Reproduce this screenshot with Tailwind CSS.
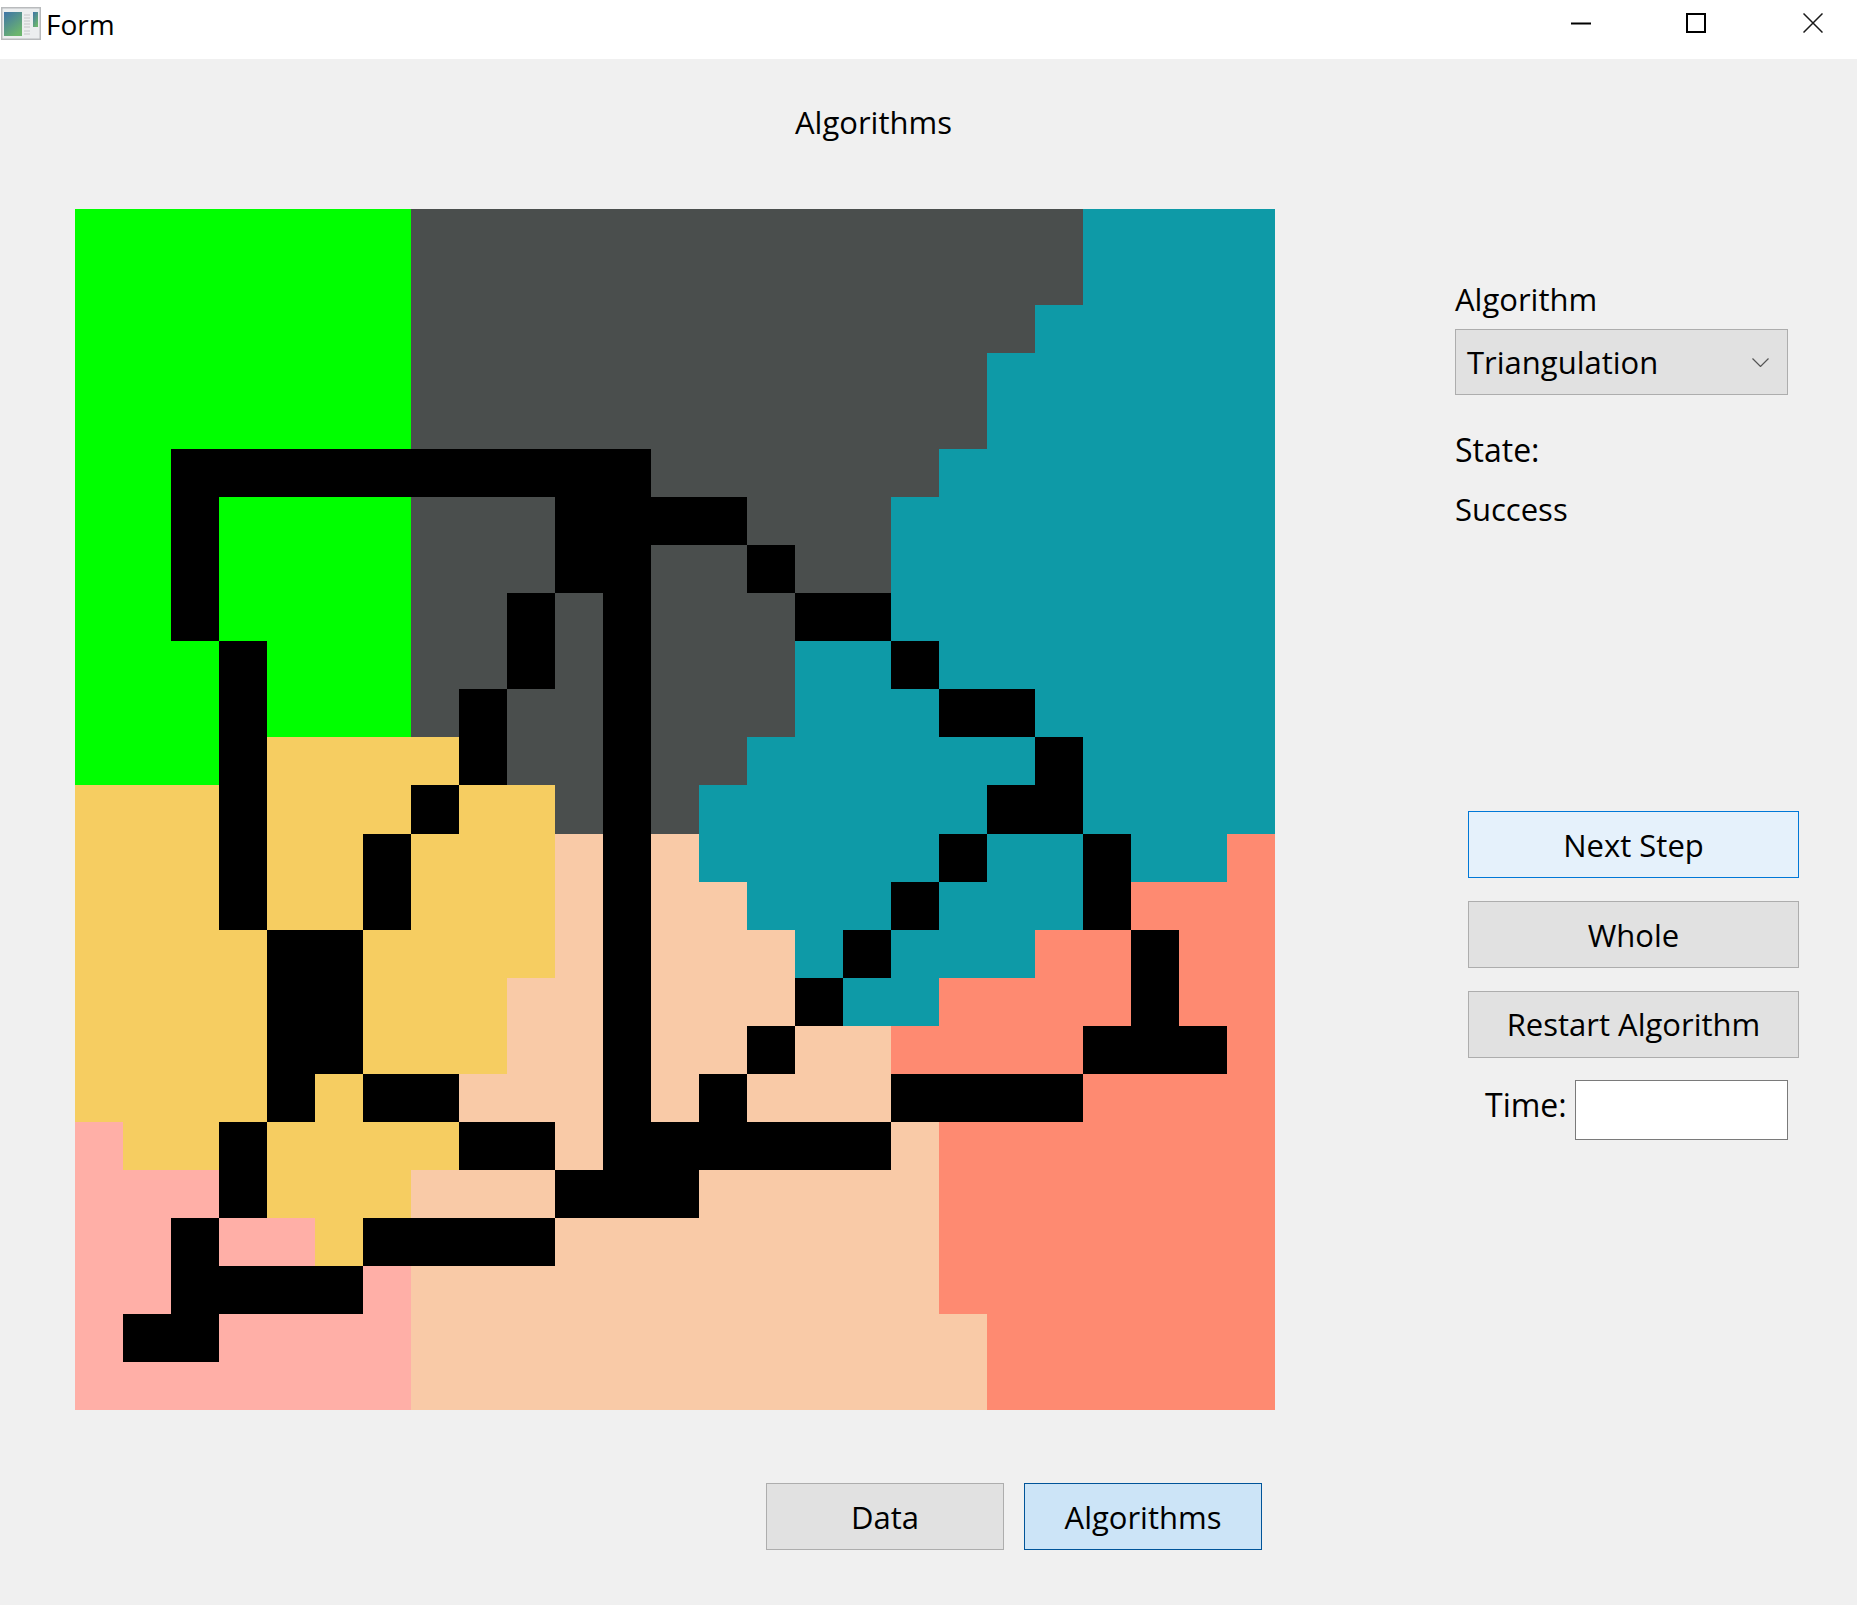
<!DOCTYPE html>
<html lang="en">
<head>
    <meta charset="UTF-8">
    <title>Form</title>
    <script src="https://cdn.jsdelivr.net/npm/@tailwindcss/browser@4"></script>
</head>
<body class="h-[1605px] w-[1857px] flex flex-col overflow-hidden bg-[#f0f0f0] text-black font-['Open_Sans',sans-serif] text-[31px] leading-none">
    <!-- Title bar -->
    <header class="h-[59px] bg-white flex items-center shrink-0 relative">
        <svg class="ml-[1px] mb-[12px] w-[40px] h-[34px]" viewBox="0 0 40 34">
            <defs>
                <linearGradient id="pane" x1="0" y1="0" x2="0.6" y2="1">
                    <stop offset="0" stop-color="#3f74a8"/>
                    <stop offset="1" stop-color="#6cb56e"/>
                </linearGradient>
            </defs>
            <rect x="0" y="0" width="40" height="33" fill="#b9bbbd"/>
            <rect x="1.5" y="1.5" width="37" height="30" fill="#eceeef"/>
            <rect x="3" y="5" width="18" height="24" fill="url(#pane)"/>
            <rect x="32" y="5" width="5" height="15" fill="url(#pane)"/>
            <path d="M23 8h6M23 11h6M23 14h6M23 17h6M23 20h6M23 24h6M23 27h6" stroke="#c4c6c8" stroke-width="1"/>
        </svg>
        <span class="ml-[5px] mb-[12px] text-[28px]">Form</span>
        <svg class="ml-auto w-[20px] h-[20px] mb-[13px]" viewBox="0 0 20 20"><path d="M0 10.5h20" stroke="#000" stroke-width="2"/></svg>
        <svg class="ml-[95px] w-[20px] h-[20px] mb-[13px]" viewBox="0 0 20 20"><rect x="1" y="1" width="18" height="18" fill="none" stroke="#000" stroke-width="2"/></svg>
        <svg class="ml-[97px] mr-[34px] w-[20px] h-[20px] mb-[13px]" viewBox="0 0 20 20"><path d="M0.5 0.5l19 19M19.5 0.5l-19 19" stroke="#1a1a1a" stroke-width="1.5"/></svg>
    </header>

    <main class="flex-1 flex">
        <!-- Left: heading, region grid, tab buttons -->
        <section class="w-[1455px] shrink-0 flex flex-col">
            <div class="h-[150px] pl-[795px] pt-[48px]">Algorithms</div>
            <div id="grid" class="ml-[75px] w-[1200px] h-[1201px] grid grid-cols-[repeat(25,48px)] grid-rows-[repeat(25,1fr)]"></div>
            <div class="mt-[73px] ml-[766px] flex gap-[20px]">
                <button class="w-[238px] h-[67px] pt-[2px] bg-[#e1e1e1] border border-[#adadad]">Data</button>
                <button class="w-[238px] h-[67px] pt-[2px] bg-[#cce4f7] border border-[#005499]">Algorithms</button>
            </div>
        </section>

        <!-- Right: controls -->
        <aside class="flex-1 flex flex-col">
            <label class="mt-[214px] h-[56px] pb-[4px] flex items-center">Algorithm</label>
            <div class="w-[333px] h-[66px] bg-[#e1e1e1] border border-[#adadad] flex items-center pl-[11px] pr-[18px] justify-between">
                <span>Triangulation</span>
                <svg class="w-[17px] h-[9px]" viewBox="0 0 17 9"><path d="M0.5 0.5l8 8 8-8" fill="none" stroke="#555" stroke-width="1.2"/></svg>
            </div>
            <div class="mt-[39px] text-[32px]">State:</div>
            <div class="mt-[28px]">Success</div>
            <div class="mt-[286px] ml-[13px] flex flex-col gap-[23px] w-[331px]">
                <button class="h-[67px] pt-[2px] bg-[#e5f1fb] border border-[#0078d7]">Next Step</button>
                <button class="h-[67px] pt-[2px] bg-[#e1e1e1] border border-[#adadad]">Whole</button>
                <button class="h-[67px] bg-[#e1e1e1] border border-[#adadad]">Restart Algorithm</button>
            </div>
            <div class="mt-[22px] ml-[30px] flex items-center">
                <span class="w-[90px] pb-[10px] text-[32px]">Time:</span>
                <input type="text" class="w-[213px] h-[60px] bg-white border border-[#7a7a7a]">
            </div>
        </aside>
    </main>

    <script>
        // G green, D dark, T teal, Y yellow, P peach, R pink, O salmon, K wall
        const colors = {
            G: 'bg-[#00ff00]',
            D: 'bg-[#4a4e4d]',
            T: 'bg-[#0e9aa7]',
            Y: 'bg-[#f6cd61]',
            P: 'bg-[#f9caa7]',
            R: 'bg-[#ffafa7]',
            O: 'bg-[#fe8a71]',
            K: 'bg-black'
        };
        const rows = [
            'GGGGGGGDDDDDDDDDDDDDDTTTT',
            'GGGGGGGDDDDDDDDDDDDDDTTTT',
            'GGGGGGGDDDDDDDDDDDDDTTTTT',
            'GGGGGGGDDDDDDDDDDDDTTTTTT',
            'GGGGGGGDDDDDDDDDDDDTTTTTT',
            'GGKKKKKKKKKKDDDDDDTTTTTTT',
            'GGKGGGGDDDKKKKDDDTTTTTTTT',
            'GGKGGGGDDDKKDDKDDTTTTTTTT',
            'GGKGGGGDDKDKDDDKKTTTTTTTT',
            'GGGKGGGDDKDKDDDTTKTTTTTTT',
            'GGGKGGGDKDDKDDDTTTKKTTTTT',
            'GGGKYYYYKDDKDDTTTTTTKTTTT',
            'YYYKYYYKYYDKDTTTTTTKKTTTT',
            'YYYKYYKYYYPKPTTTTTKTTKTTO',
            'YYYKYYKYYYPKPPTTTKTTTKOOO',
            'YYYYKKYYYYPKPPPTKTTTOOKOO',
            'YYYYKKYYYPPKPPPKTTOOOOKOO',
            'YYYYKKYYYPPKPPKPPOOOOKKKO',
            'YYYYKYKKPPPKPKPPPKKKKOOOO',
            'RYYKYYYYKKPKKKKKKPOOOOOOO',
            'RRRKYYYPPPKKKPPPPPOOOOOOO',
            'RRKRRYKKKKPPPPPPPPOOOOOOO',
            'RRKKKKRPPPPPPPPPPPOOOOOOO',
            'RKKRRRRPPPPPPPPPPPPOOOOOO',
            'RRRRRRRPPPPPPPPPPPPOOOOOO'
        ];
        document.getElementById('grid').innerHTML = rows
            .map(row => [...row].map(c => `<div class="${colors[c]}"></div>`).join(''))
            .join('');
    </script>
</body>
</html>
